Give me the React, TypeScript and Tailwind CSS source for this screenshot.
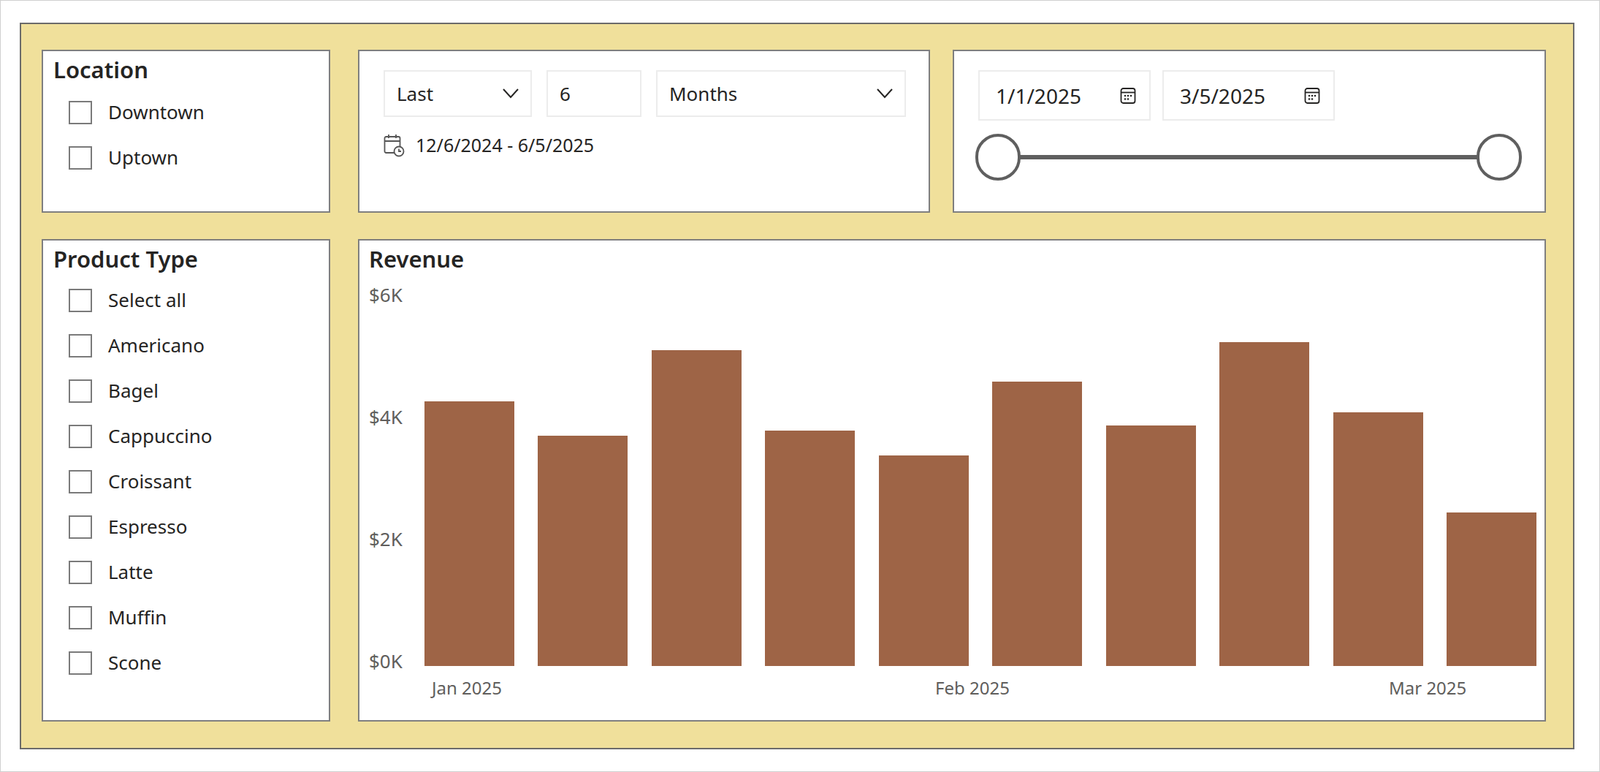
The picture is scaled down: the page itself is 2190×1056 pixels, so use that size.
import React from 'react';

const bars = [4246, 3689, 5066, 3770, 3377, 4557, 3852, 5197, 4066, 2459];
const products = ['Select all', 'Americano', 'Bagel', 'Cappuccino', 'Croissant', 'Espresso', 'Latte', 'Muffin', 'Scone'];

function Check({ label }: { label: string }) {
  return (
    <div className="flex items-center h-[62px] pl-[35px]">
      <div className="w-[32px] h-[32px] border-2 border-[#7a7a7a] bg-white" />
      <span className="ml-[22px] text-[26px] text-[#252423]">{label}</span>
    </div>
  );
}

function Chevron() {
  return (
    <svg width="22" height="14" viewBox="0 0 22 14" fill="none" stroke="#252423" strokeWidth="2">
      <path d="M1 1l10 11L21 1" />
    </svg>
  );
}

function CalIcon() {
  return (
    <svg width="22" height="24" viewBox="0 0 22 24" fill="none" stroke="#252423" strokeWidth="1.8">
      <rect x="1.5" y="2" width="19" height="20" rx="3" />
      <path d="M1.5 7.5h19" />
      <g fill="#252423" stroke="none">
        <circle cx="7" cy="12" r="1.3" /><circle cx="11" cy="12" r="1.3" /><circle cx="15" cy="12" r="1.3" />
        <circle cx="7" cy="16.5" r="1.3" /><circle cx="11" cy="16.5" r="1.3" />
      </g>
    </svg>
  );
}

export default function App() {
  return (
    <div className="w-[2190px] h-[1056px] bg-white border border-[#d0d0d0] pt-[30px] pl-[26px] font-['Lato',sans-serif] text-[#252423]">
      <div className="w-[2128px] h-[994px] bg-[#f0e09b] border-2 border-[#6b6b6b] pl-[28px] pt-[35px] flex flex-col gap-[36px]">
        {/* top row */}
        <div className="flex h-[223px]">
          <div className="w-[395px] bg-white border-2 border-[#7f7f7f] pl-[14px] pt-[2px]">
            <div className="text-[31px] font-semibold">Location</div>
            <div className="-ml-[14px] mt-[4px]">
              <Check label="Downtown" />
              <Check label="Uptown" />
            </div>
          </div>
          <div className="w-[783px] ml-[38px] bg-white border-2 border-[#7f7f7f] pl-[33px] pt-[26px]">
            <div className="flex gap-[20px] h-[64px]">
              <div className="w-[203px] border-2 border-[#ececec] flex items-center justify-between pl-[16px] pr-[16px] text-[26px]">
                Last <Chevron />
              </div>
              <div className="w-[130px] border-2 border-[#ececec] flex items-center pl-[16px] text-[26px]">6</div>
              <div className="w-[342px] border-2 border-[#ececec] flex items-center justify-between pl-[16px] pr-[16px] text-[26px]">
                Months <Chevron />
              </div>
            </div>
            <div className="flex items-center mt-[20px] gap-[14px] text-[25px]">
              <svg width="30" height="32" viewBox="0 0 30 32" fill="none" stroke="#555" strokeWidth="1.8">
                <rect x="1.5" y="4" width="21" height="22" rx="2" />
                <path d="M1.5 10h21M7 1v5M17 1v5" />
                <circle cx="21" cy="24" r="6.5" fill="white" />
                <path d="M21 20.5V24h3" />
              </svg>
              12/6/2024 - 6/5/2025
            </div>
          </div>
          <div className="w-[812px] ml-[31px] bg-white border-2 border-[#7f7f7f] pl-[33px] pt-[26px]">
            <div className="flex gap-[16px]">
              {['1/1/2025', '3/5/2025'].map((d) => (
                <div key={d} className="w-[236px] h-[69px] border-2 border-[#ececec] flex items-center justify-between pl-[22px] pr-[18px] text-[28px]">
                  {d} <CalIcon />
                </div>
              ))}
            </div>
            <div className="relative mt-[18px] w-[748px] h-[64px] -ml-[4px]">
              <div className="absolute left-[30px] right-[30px] top-[29px] h-[6px] bg-[#5f5f5f]" />
              <div className="absolute left-0 top-0 w-[62px] h-[64px] rounded-full border-[4px] border-[#5f5f5f] bg-white" />
              <div className="absolute right-0 top-0 w-[62px] h-[64px] rounded-full border-[4px] border-[#5f5f5f] bg-white" />
            </div>
          </div>
        </div>
        {/* bottom row */}
        <div className="flex h-[660px]">
          <div className="w-[395px] bg-white border-2 border-[#7f7f7f] pl-[14px] pt-[2px]">
            <div className="text-[31px] font-semibold">Product Type</div>
            <div className="-ml-[14px] mt-[2px]">
              {products.map((p) => <Check key={p} label={p} />)}
            </div>
          </div>
          <div className="w-[1626px] ml-[38px] bg-white border-2 border-[#7f7f7f] pl-[13px] pt-[2px]">
            <div className="text-[31px] font-semibold">Revenue</div>
            <div className="flex mt-[22px]">
              <div className="w-[76px] h-[540px] flex flex-col justify-between text-[26px] text-[#605e5c] -mt-[16px]">
                <span>$6K</span><span>$4K</span><span>$2K</span><span>$0K</span>
              </div>
              <div className="flex flex-col">
                <div className="h-[511px] w-[1522px] flex items-end justify-between">
                  {bars.map((v, i) => (
                    <div key={i} className="w-[123px] bg-[#9e6446]" style={{ height: `${(v / 6000) * 511}px` }} />
                  ))}
                </div>
                <div className="relative h-[50px] text-[24px] text-[#605e5c]">
                  <span className="absolute left-[10px] top-[12px]">Jan 2025</span>
                  <span className="absolute left-[699px] top-[12px]">Feb 2025</span>
                  <span className="absolute left-[1320px] top-[12px]">Mar 2025</span>
                </div>
              </div>
            </div>
          </div>
        </div>
      </div>
    </div>
  );
}
